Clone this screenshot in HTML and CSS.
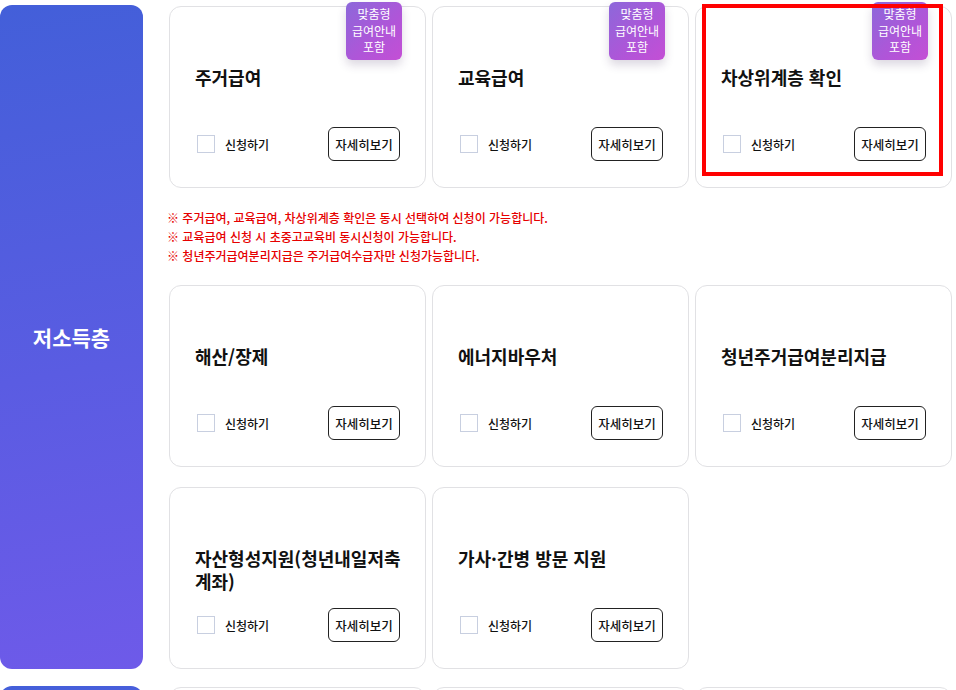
FILE: index.html
```html
<!DOCTYPE html>
<html lang="ko">
<head>
<meta charset="utf-8">
<link rel="stylesheet" href="styles.css">
</head>
<body>
<div class="page">
  <section class="group">
    <div class="side"><span>저소득층</span></div>
    <div class="grid">
      <div class="card">
        <div class="badge">맞춤형<br>급여안내<br>포함</div>
        <div class="title">주거급여</div>
        <div class="foot"><label class="chk"><span class="box"></span>신청하기</label><button class="more">자세히보기</button></div>
      </div>
      <div class="card">
        <div class="badge">맞춤형<br>급여안내<br>포함</div>
        <div class="title">교육급여</div>
        <div class="foot"><label class="chk"><span class="box"></span>신청하기</label><button class="more">자세히보기</button></div>
      </div>
      <div class="card">
        <div class="badge">맞춤형<br>급여안내<br>포함</div>
        <div class="title">차상위계층 확인</div>
        <div class="foot"><label class="chk"><span class="box"></span>신청하기</label><button class="more">자세히보기</button></div>
        <div class="highlight"></div>
      </div>
      <div class="notes">
        <p>※ 주거급여, 교육급여, 차상위계층 확인은 동시 선택하여 신청이 가능합니다.</p>
        <p>※ 교육급여 신청 시 초중고교육비 동시신청이 가능합니다.</p>
        <p>※ 청년주거급여분리지급은 주거급여수급자만 신청가능합니다.</p>
      </div>
      <div class="card">
        <div class="title">해산/장제</div>
        <div class="foot"><label class="chk"><span class="box"></span>신청하기</label><button class="more">자세히보기</button></div>
      </div>
      <div class="card">
        <div class="title">에너지바우처</div>
        <div class="foot"><label class="chk"><span class="box"></span>신청하기</label><button class="more">자세히보기</button></div>
      </div>
      <div class="card">
        <div class="title">청년주거급여분리지급</div>
        <div class="foot"><label class="chk"><span class="box"></span>신청하기</label><button class="more">자세히보기</button></div>
      </div>
      <div class="card">
        <div class="title">자산형성지원(청년내일저축 계좌)</div>
        <div class="foot"><label class="chk"><span class="box"></span>신청하기</label><button class="more">자세히보기</button></div>
      </div>
      <div class="card">
        <div class="title">가사·간병 방문 지원</div>
        <div class="foot"><label class="chk"><span class="box"></span>신청하기</label><button class="more">자세히보기</button></div>
      </div>
    </div>
  </section>
  <section class="group">
    <div class="side"></div>
    <div class="grid">
      <div class="card"></div>
      <div class="card"></div>
      <div class="card"></div>
    </div>
  </section>
</div>
</body>
</html>
```
FILE: styles.css
```css
* { box-sizing: border-box; }
html, body { margin: 0; padding: 0; background: #fff; overflow: hidden; }
body {
  font-family: "Noto Sans CJK KR", "Noto Sans", sans-serif;
  color: #111;
  width: 956px;
  height: 690px;
}
.page {
  padding-top: 5px;
  display: flex;
  flex-direction: column;
  gap: 17px;
}
.group {
  display: flex;
  gap: 26px;
}
.side {
  width: 143px;
  flex: none;
  border-radius: 12px;
  background: linear-gradient(170deg, #435fd9 0%, #5a5ce2 55%, #6e5ae9 100%);
  display: flex;
  align-items: center;
  justify-content: center;
  color: #fff;
  font-size: 21px;
  font-weight: 700;
  min-height: 40px;
}
.grid {
  margin-top: 1px;
  display: grid;
  grid-template-columns: repeat(3, 257px);
  column-gap: 6px;
  row-gap: 20px;
}
.card {
  position: relative;
  height: 182px;
  border: 1px solid #e1e1e4;
  border-radius: 12px;
  background: #fff;
  display: flex;
  flex-direction: column;
  padding: 0 25px 26px 25px;
}
.title {
  margin-top: 59px;
  margin-right: -8px;
  font-size: 18px;
  font-weight: 700;
  line-height: 23px;
}
.foot {
  margin-top: auto;
  display: flex;
  align-items: center;
  justify-content: space-between;
}
.chk {
  display: flex;
  align-items: center;
  gap: 10px;
  font-size: 12px;
  font-weight: 500;
  padding-left: 2px;
}
.box {
  width: 18px;
  height: 18px;
  border: 1px solid #c8cfe0;
  background: #fff;
}
.more {
  width: 72px;
  height: 34px;
  border: 1px solid #222;
  border-radius: 6px;
  background: #fff;
  font-family: inherit;
  font-size: 12.5px;
  font-weight: 500;
  color: #111;
  padding: 0;
}
.badge {
  position: absolute;
  top: -5px;
  right: 23px;
  width: 56px;
  height: 58px;
  border-radius: 6px;
  background: linear-gradient(135deg, #8c68da 0%, #b055d8 60%, #c44fd5 100%);
  box-shadow: 0 5px 10px rgba(60, 40, 90, 0.18);
  color: #fff;
  font-size: 12px;
  line-height: 16.5px;
  text-align: center;
  padding-top: 4px;
}
.highlight {
  position: absolute;
  left: 6px;
  top: -3px;
  width: 241px;
  height: 172px;
  border: 4px solid #ff0000;
  pointer-events: none;
}
.notes {
  grid-column: 1 / -1;
  margin-left: -2px;
  color: #e60000;
  font-size: 12px;
  font-weight: 500;
  line-height: 19px;
}
.notes p { margin: 0; }
```
